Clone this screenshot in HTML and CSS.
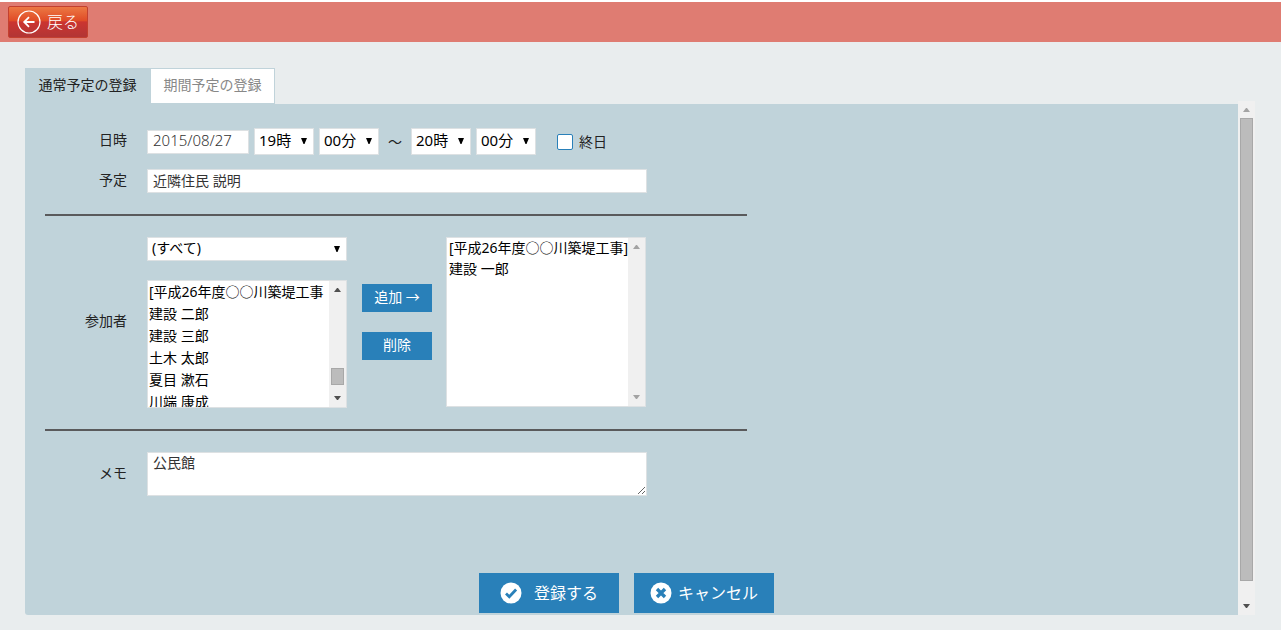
FILE: index.html
```html
<!DOCTYPE html>
<html lang="ja">
<head>
<meta charset="utf-8">
<title>予定の登録</title>
<link rel="stylesheet" href="styles.css">
</head>
<body>
<header class="topbar">
  <button type="button" class="back">
    <svg class="back-icon" viewBox="0 0 24 24" aria-hidden="true"><circle cx="12" cy="12" r="11" fill="none" stroke="currentColor" stroke-width="1.2"/><path d="M17.5 12H7.5M12 7.2 7.2 12l4.8 4.8" fill="none" stroke="currentColor" stroke-width="1.8"/></svg>
    戻る
  </button>
</header>
<main class="page">
  <div class="content">
    <nav class="tabs">
      <a href="#normal" class="tab tab-active">通常予定の登録</a>
      <a href="#period" class="tab">期間予定の登録</a>
    </nav>
    <form class="panel" id="normal">
      <div class="fields">
        <div class="row row-date">
          <label class="name" for="date">日時</label>
          <div class="controls">
            <input class="text date" id="date" type="text" value="2015/08/27">
            <span class="drop"><select class="pick" aria-label="開始時"><option>19時</option></select><svg class="caret" viewBox="0 0 6 7" aria-hidden="true"><path d="M0 0h6L3.5 6h-1z"/></svg></span>
            <span class="drop"><select class="pick" aria-label="開始分"><option>00分</option></select><svg class="caret" viewBox="0 0 6 7" aria-hidden="true"><path d="M0 0h6L3.5 6h-1z"/></svg></span>
            <span class="until">～</span>
            <span class="drop"><select class="pick" aria-label="終了時"><option>20時</option></select><svg class="caret" viewBox="0 0 6 7" aria-hidden="true"><path d="M0 0h6L3.5 6h-1z"/></svg></span>
            <span class="drop"><select class="pick" aria-label="終了分"><option>00分</option></select><svg class="caret" viewBox="0 0 6 7" aria-hidden="true"><path d="M0 0h6L3.5 6h-1z"/></svg></span>
            <label class="allday"><input class="tick" type="checkbox">終日</label>
          </div>
        </div>
        <div class="row row-title">
          <label class="name" for="title">予定</label>
          <input class="text wide" id="title" type="text" value="近隣住民 説明">
        </div>
        <hr class="rule">
        <div class="row">
          <label class="name" for="people">参加者</label>
          <div class="members">
            <div class="source">
              <span class="drop drop-wide"><select class="pick pick-group" aria-label="グループ"><option>(すべて)</option></select><svg class="caret" viewBox="0 0 6 7" aria-hidden="true"><path d="M0 0h6L3.5 6h-1z"/></svg></span>
              <div class="listbox listbox-source">
                <select class="list" id="people" size="6" multiple>
                  <option>[平成26年度○○川築堤工事</option>
                  <option>建設 二郎</option>
                  <option>建設 三郎</option>
                  <option>土木 太郎</option>
                  <option>夏目 漱石</option>
                  <option>川端 康成</option>
                </select>
                <div class="scroll" aria-hidden="true">
                  <svg class="arrow" viewBox="0 0 7 4"><path d="M0 4h7L4 0H3z"/></svg>
                  <span class="track track-end"><span class="thumb"></span></span>
                  <svg class="arrow" viewBox="0 0 7 4"><path d="M0 0h7L4 4H3z"/></svg>
                </div>
              </div>
            </div>
            <div class="moves">
              <button type="button" class="move">追加 →</button>
              <button type="button" class="move">削除</button>
            </div>
            <div class="listbox listbox-chosen">
              <select class="list" size="8" multiple aria-label="選択した参加者">
                <option>[平成26年度○○川築堤工事]</option>
                <option>建設 一郎</option>
              </select>
              <div class="scroll scroll-off" aria-hidden="true">
                <svg class="arrow" viewBox="0 0 7 4"><path d="M0 4h7L4 0H3z"/></svg>
                <svg class="arrow" viewBox="0 0 7 4"><path d="M0 0h7L4 4H3z"/></svg>
              </div>
            </div>
          </div>
        </div>
        <hr class="rule">
        <div class="row">
          <label class="name" for="memo">メモ</label>
          <textarea class="text memo" id="memo">公民館</textarea>
        </div>
      </div>
      <div class="actions">
        <button type="submit" class="action action-save">
          <svg class="action-icon" viewBox="0 0 22 22" aria-hidden="true"><circle cx="11" cy="11" r="10.5" fill="#fff"/><path d="M6 11.5l3.3 3.2 6.8-7.2" fill="none" stroke="#2980b9" stroke-width="2.8"/></svg>
          登録する
        </button>
        <button type="button" class="action">
          <svg class="action-icon" viewBox="0 0 22 22" aria-hidden="true"><circle cx="11" cy="11" r="10.5" fill="#fff"/><path d="M7 7l8 8M15 7l-8 8" fill="none" stroke="#2980b9" stroke-width="3.4"/></svg>
          キャンセル
        </button>
      </div>
    </form>
  </div>
  <div class="scroll scroll-page" aria-hidden="true">
    <svg class="arrow arrow-off" viewBox="0 0 7 4"><path d="M0 4h7L4 0H3z"/></svg>
    <span class="track"><span class="thumb thumb-page"></span></span>
    <svg class="arrow" viewBox="0 0 7 4"><path d="M0 0h7L4 4H3z"/></svg>
  </div>
</main>
</body>
</html>
```
FILE: styles.css
```css
* { box-sizing: border-box; }

body {
  margin: 0;
  background: #e9edee;
  color: #222;
  font: 400 14px/20px "Noto Sans", "Noto Sans CJK JP", sans-serif;
}

button, input, select, textarea { font: inherit; margin: 0; border-radius: 0; }

.topbar {
  height: 42px;
  padding: 4px 8px;
  border-top: 2px solid #fff;
  background: #df7c72;
}

.back {
  display: flex;
  align-items: center;
  gap: 6px;
  height: 32px;
  padding: 0 8px;
  border: 1px solid #c4402f;
  border-radius: 2px;
  background: linear-gradient(#ec7843, #e04c27 45%, #cb3530 50%, #b23535);
  color: #fff;
  font-size: 16px;
  font-weight: 300;
}
.back-icon { width: 24px; height: 24px; }

.page {
  display: flex;
  align-items: stretch;
  padding: 26px 26px 15px 25px;
}
.content { flex: 1; }

.tabs { display: flex; }
.tab {
  width: 125px;
  height: 36px;
  padding: 6px 0;
  border: 1px solid #c0d3da;
  background: #fff;
  color: #888;
  text-align: center;
  text-decoration: none;
  white-space: nowrap;
}
.tab-active { background: #c0d3da; color: #222; }

.panel {
  padding: 24px 20px 2px;
  border-radius: 0 0 0 3px;
  background: #c0d3da;
}
.fields { max-width: 702px; }

.row { display: flex; align-items: center; gap: 20px; }
.row-title { margin-top: 14px; }
.name { width: 82px; padding-bottom: 3px; text-align: right; }

.controls { display: flex; align-items: center; gap: 5px; }

.text {
  border: 1px solid #dde1e3;
  background: #fff;
  color: #333;
  padding: 0 5px 3px;
}
.date { width: 102px; height: 24px; font-size: 15px; font-weight: 300; color: #333; }
.wide { width: 500px; height: 24px; }

.drop { display: grid; align-items: center; width: 60px; }
.drop-wide { width: 200px; }
.pick {
  grid-area: 1 / 1;
  appearance: none;
  width: 100%;
  height: 27px;
  padding: 0 4px 3px;
  border: 1px solid #dde1e3;
  background: #fff;
  color: #000;
  font-size: 15px;
}
.pick-group { height: 24px; font-size: 14px; }
.caret {
  grid-area: 1 / 1;
  justify-self: end;
  width: 6px;
  height: 7px;
  margin-right: 7px;
  pointer-events: none;
}

.until { width: 22px; text-align: center; }
.allday { display: flex; align-items: center; gap: 6px; margin-left: 16px; }
.tick {
  appearance: none;
  width: 16px;
  height: 16px;
  border: 1px solid #2980b9;
  border-radius: 2px;
  background: #fff;
}

.rule { height: 2px; margin: 21px 0; border: 0; background: #5a5a5c; }

.members { display: flex; align-items: flex-start; }
.source { display: grid; gap: 19px; }

.listbox {
  display: flex;
  width: 200px;
  border: 1px solid #dde1e3;
  background: #fff;
}
.listbox-source { height: 128px; }
.listbox-chosen { height: 170px; }
.list {
  flex: 1;
  min-width: 0;
  height: 100%;
  padding: 0;
  border: 0;
  background: #fff;
  color: #000;
  overflow: hidden;
}
.list option { display: flex; align-items: center; height: 22px; padding: 0 1px 2px; }
.listbox-chosen option { height: 21px; padding: 0 2px 3px; }

.scroll {
  display: flex;
  flex-direction: column;
  align-items: center;
  justify-content: space-between;
  width: 17px;
  padding: 7px 0;
  background: #f0f0f0;
}
.scroll-page { margin-top: 33px; }
.arrow { width: 7px; height: 4px; fill: #505050; }
.scroll-off .arrow, .arrow-off { fill: #a3a3a3; }
.track { display: flex; flex: 1; flex-direction: column; padding: 6px 0; }
.track-end { justify-content: flex-end; padding-bottom: 11px; }
.thumb { width: 13px; height: 17px; border: 1px solid #a8a8a8; background: #bcbcbc; }
.thumb-page { flex: 1; margin-bottom: 17px; }

.moves { display: grid; gap: 20px; padding: 47px 14px 0 15px; }
.move {
  width: 70px;
  height: 28px;
  padding: 0 0 2px;
  border: 0;
  background: #2980b9;
  color: #fff;
}

.memo { display: block; width: 500px; height: 44px; padding: 0 5px; }

.actions {
  display: flex;
  justify-content: center;
  gap: 15px;
  margin-top: 77px;
  padding-right: 10px;
}
.action {
  display: flex;
  align-items: center;
  justify-content: center;
  gap: 6px;
  width: 140px;
  height: 40px;
  padding: 0;
  border: 0;
  background: #2980b9;
  color: #fff;
  font-size: 16px;
}
.action-save { gap: 12px; }
.action-icon { width: 22px; height: 22px; }
```
